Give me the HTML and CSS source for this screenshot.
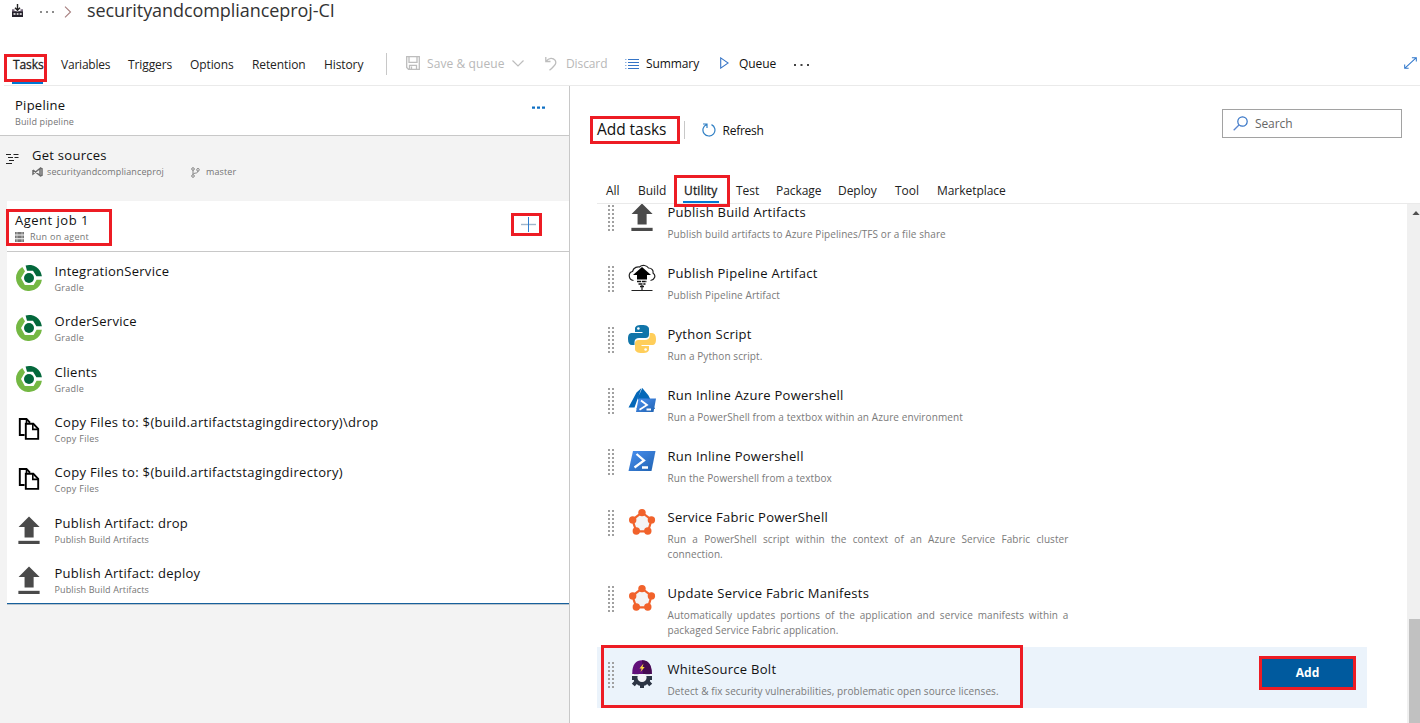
FILE: index.html
```html
<!DOCTYPE html>
<html lang="en">
<head>
<meta charset="utf-8">
<title>securityandcomplianceproj-CI</title>
<link rel="stylesheet" href="styles.css">
</head>
<body>
<svg class="defs" width="0" height="0">
  <defs>
    <linearGradient id="psg" x1="0" y1="0" x2="1" y2="1"><stop offset="0" stop-color="#4a90f0"/><stop offset="1" stop-color="#1f62b0"/></linearGradient>
    <symbol id="gradle" viewBox="0 0 28 28">
      <path d="M7.3 2.900A13 13 0 1 0 26.900 15.800H21.600L18.600 21H9.800L6 14 10 7.200Z" fill="#74b843"/>
      <path d="M10.600 1.400A13 13 0 0 1 26.900 12.200H21.400L18 6.800H12Z" fill="#04683c"/>
      <circle cx="14" cy="14" r="5" fill="#04683c"/>
    </symbol>
    <symbol id="copy" viewBox="0 0 28 28">
      <path d="M9.500 20H4.800V4H11.500L15 7.600M10.800 8.800H18.300L23.200 13.800V23.900H10.800Z" fill="none" stroke="#000" stroke-width="1.900"/>
      <path d="M17.800 8.800V14.400H23.400" fill="none" stroke="#000" stroke-width="1.600"/>
      <path d="M11.500 4V8" stroke="#000" stroke-width="1.600"/>
    </symbol>
    <symbol id="upload" viewBox="0 0 28 29">
      <path d="M14 .5 25 11.500H18.800V22.300H9.400V11.500H3.200Z" fill="#4a4a4a"/><path d="M3 25.700H25V29H3Z" fill="#4a4a4a"/>
    </symbol>
    <symbol id="fabric" viewBox="0 0 28 28">
      <path d="M14 4.500 23.600 12 20 23.400H8.300L4.400 12Z" fill="#f4f4f4" stroke="#f1622b" stroke-width="2.200"/>
      <g fill="#f1622b"><circle cx="14" cy="4.600" r="3.700"/><circle cx="23.400" cy="11.900" r="3.700"/><circle cx="19.800" cy="23" r="3.700"/><circle cx="8.300" cy="23" r="3.700"/><circle cx="4.700" cy="11.900" r="3.700"/></g>
    </symbol>
    <symbol id="grip" viewBox="0 0 6 26">
      <path d="M1 0V26M5 0V26" stroke="#a0a0a0" stroke-width="2" stroke-dasharray="2 2"/>
    </symbol>
  </defs>
</svg>

<header class="top">
  <div class="crumbs">
    <svg class="crumb-logo" width="13" height="14" viewBox="0 0 13 14"><path d="M6.500 0V6M4 3.800 6.500 6.300 9 3.800" fill="none" stroke="#222" stroke-width="1.400"/><path d="M1 5.200H3.500V7H5L6.500 8.200 8 7H9.500V5.200H12V9H1Z" fill="#7a6c80"/><path d="M1 7.500H12V13H1Z" fill="#24212b"/><path d="M2.500 10H4.500M5.700 10H7.500M8.700 10H10.700" stroke="#fff" stroke-width="1.500"/></svg>
    <svg class="crumb-dots" width="14" height="2" viewBox="0 0 14 2"><path d="M0 0H2V2H0ZM6 0H8V2H6ZM12 0H14V2H12Z" fill="#8b8b8b"/></svg>
    <svg class="crumb-sep" width="8" height="12" viewBox="0 0 8 12"><path d="M1 .7 6.500 6 1 11.300" fill="none" stroke="#a67f7f" stroke-width="1.100"/></svg>
    <h1 class="title">securityandcomplianceproj-CI</h1>
  </div>
  <div class="toolbar">
    <nav class="tabs">
      <span class="tab t-tasks">Tasks</span><span class="tab t-vars">Variables</span><span class="tab t-trig">Triggers</span><span class="tab t-opt">Options</span><span class="tab t-ret">Retention</span><span class="tab t-hist">History</span>
    </nav>
    <div class="cmds">
      <span class="cmd c-save off"><svg width="14" height="14" viewBox="0 0 14 14" fill="none" stroke="#bdbdbd" stroke-width="1.300"><path d="M.7.7H13.300V13.300H2.500L.7 11.500ZM3 .7V6.300H11V.7M3.500 13V9.300H10.500V13M5.500 10.500V13"/></svg><b>Save &amp; queue</b><svg width="12" height="7" viewBox="0 0 12 7"><path d="M.5.5 6 6 11.500.5" fill="none" stroke="#bdbdbd" stroke-width="1.200"/></svg></span>
      <span class="cmd c-disc off"><svg width="12" height="15" viewBox="0 0 12 15"><path d="M.8 1V5.500H5.500M1 5.300C4 1.500 8 1.500 10 4.200 12 7 10.500 9 4.500 14.200" fill="none" stroke="#bdbdbd" stroke-width="1.300"/></svg><b>Discard</b></span>
      <span class="cmd c-sum"><svg width="14" height="11" viewBox="0 0 14 11"><path d="M3 1.500H14M3 4.500H14M3 7.500H14M3 10.500H14" stroke="#3574c6"/><path d="M0 1.500H1.500M0 4.500H1.500M0 7.500H1.500M0 10.500H1.500" stroke="#8fb2e0"/></svg><b>Summary</b></span>
      <span class="cmd c-queue"><svg width="9" height="12" viewBox="0 0 9 12"><path d="M.7.9 8.200 6 .7 11.100Z" fill="none" stroke="#3574c6" stroke-width="1.100"/></svg><b>Queue</b></span>
      <svg class="more" width="15" height="2" viewBox="0 0 15 2"><path d="M0 0H2V2H0ZM6.500 0H8.500V2H6.500ZM13 0H15V2H13Z" fill="#444"/></svg>
    </div>
    <svg class="expand" width="13" height="12" viewBox="0 0 14 13"><path d="M1 12 13 1M8.500.7H13.300V5M.7 8V12.300H5" fill="none" stroke="#2f77cc" stroke-width="1.100"/></svg>
  </div>
</header>

<main class="main">
  <section class="left">
    <div class="pipeline">
      <div><div class="name">Pipeline</div><div class="sub">Build pipeline</div></div>
      <svg class="pdots" width="13" height="3" viewBox="0 0 13 3"><path d="M0 .5H3V2.700H0ZM5 .5H8V2.700H5ZM10 .5H13V2.700H10Z" fill="#0f70c4"/></svg>
    </div>
    <div class="sources">
      <svg class="src-icon" width="13" height="12" viewBox="0 0 13 12"><path d="M0 1.500H5M7.500 1.500H12.500M2 4.500H7M8.500 4.500H12.500M3 7.500H8M0 10.500H6" stroke="#222" stroke-width="1.200"/></svg>
      <div>
        <div class="name">Get sources</div>
        <div class="src-meta">
          <svg width="11" height="10" viewBox="0 0 11 10"><path d="M1 3V7L8 1.500V8.500L1 3M8 .8 10 1.800V8.200L8 9.200" fill="none" stroke="#6b6b6b" stroke-width="1.500"/></svg><span class="sub s-proj">securityandcomplianceproj</span>
          <svg class="branch" width="9" height="11" viewBox="0 0 9 11" fill="none" stroke="#858585"><circle cx="2" cy="2" r="1.300"/><circle cx="7" cy="2.800" r="1.300"/><circle cx="2" cy="9" r="1.300"/><path d="M2 3.300V7.700M7 4C7 6 5 6 2.500 6.500"/></svg><span class="sub s-master">master</span>
        </div>
      </div>
    </div>
    <div class="job">
      <div class="job-head">
        <div><div class="name n-job">Agent job 1</div><div class="job-sub"><svg width="9" height="10" viewBox="0 0 9 10"><path d="M0 0H9V2.600H0ZM0 3.600H9V6.200H0ZM0 7.200H9V10H0Z" fill="#777"/><path d="M2 0V10M7 0V10" stroke="#e4e4e4" stroke-width=".6"/></svg><span class="sub s-wide">Run on agent</span></div></div>
        <svg class="plus" width="15" height="15" viewBox="0 0 15 15"><path d="M0 7.500H15" stroke="#9fb6cc" stroke-width="1.400"/><path d="M7.500 0V15" stroke="#2f7fd0"/></svg>
      </div>
      <ul class="steps">
        <li><svg class="ico"><use href="#gradle"/></svg><div><div class="name">IntegrationService</div><div class="sub s-wide">Gradle</div></div></li>
        <li><svg class="ico"><use href="#gradle"/></svg><div><div class="name">OrderService</div><div class="sub s-wide">Gradle</div></div></li>
        <li><svg class="ico"><use href="#gradle"/></svg><div><div class="name">Clients</div><div class="sub s-wide">Gradle</div></div></li>
        <li><svg class="ico"><use href="#copy"/></svg><div><div class="name n-copy">Copy Files to: $(build.artifactstagingdirectory)\drop</div><div class="sub s-wide">Copy Files</div></div></li>
        <li><svg class="ico"><use href="#copy"/></svg><div><div class="name n-copy">Copy Files to: $(build.artifactstagingdirectory)</div><div class="sub s-wide">Copy Files</div></div></li>
        <li><svg class="ico"><use href="#upload"/></svg><div><div class="name">Publish Artifact: drop</div><div class="sub">Publish Build Artifacts</div></div></li>
        <li><svg class="ico"><use href="#upload"/></svg><div><div class="name">Publish Artifact: deploy</div><div class="sub">Publish Build Artifacts</div></div></li>
      </ul>
    </div>
  </section>

  <section class="right">
    <div class="add-head">
      <h2 class="add-title">Add tasks</h2>
      <span class="refresh"><svg width="14" height="14" viewBox="0 0 14 14"><path d="M1 1H5V5M4.600 1.500A6 6 0 1 0 9.500 1.600" fill="none" stroke="#2f7fc4" stroke-width="1.200"/></svg><span>Refresh</span></span>
      <div class="search"><svg width="15" height="15" viewBox="0 0 15 15"><circle cx="9.500" cy="5.500" r="4.700" fill="none" stroke="#3574c6" stroke-width="1.200"/><path d="M6 9 .7 14.300" stroke="#5a86cf" stroke-width="1.300"/></svg><span>Search</span></div>
    </div>
    <nav class="cats"><span class="q1">All</span><span class="q2">Build</span><span class="q3">Utility</span><span class="q4">Test</span><span class="q5">Package</span><span class="q6">Deploy</span><span class="q7">Tool</span><span class="q8">Marketplace</span></nav>
    <div class="catalog">
      <ul class="list">
        <li><svg class="grip"><use href="#grip"/></svg><svg class="ico"><use href="#upload"/></svg><div><div class="name">Publish Build Artifacts</div><p>Publish build artifacts to Azure Pipelines/TFS or a file share</p></div></li>
        <li><svg class="grip"><use href="#grip"/></svg><svg class="ico" viewBox="0 0 28 28"><path d="M5.500 16.500C0 15.500 0 8.500 4.500 7.500 5.500 3 10 2.500 11.500 3 14.500.2 19 1.500 20.500 4 24 4 25.500 6.500 25 9 28.500 11.500 26.500 16 22.500 16.500" fill="none" stroke="#222" stroke-width="1.200"/><path d="M14 3 23 11H19V15.500H9V11H5Z" fill="#000"/><path d="M9 17.500H19M10.500 20H17.500M12 22.500H16" stroke="#111" stroke-width="1.700" stroke-dasharray="4 .8"/><path d="M14 21V26M3.500 26.500H24.500" stroke="#222" stroke-width="1.200"/></svg><div><div class="name">Publish Pipeline Artifact</div><p>Publish Pipeline Artifact</p></div></li>
        <li><svg class="grip"><use href="#grip"/></svg><svg class="ico" viewBox="0 0 28 28"><path d="M14 0C8.500 0 7 1.500 7 4V7H14.500V8H4C1 8 0 10 0 14S1.500 20 4 20H6.500V17C6.500 14.500 8.500 13 11 13H17.500C20 13 21 11.500 21 9.500V4C21 1.500 18.500 0 14 0Z" fill="#1175a9"/><path d="M14 28C19.500 28 21 26.500 21 24V21H13.500V20H24C27 20 28 18 28 14S26.500 8 24 8H21.700V11C21.700 13.500 19.500 15 17 15H10.500C8 15 7 16.500 7 18.500V24C7 26.500 9.500 28 14 28Z" fill="#ffce5a"/><circle cx="10.400" cy="3.500" r="1.300" fill="#fff"/><circle cx="17.600" cy="24.500" r="1.300" fill="#fff"/></svg><div><div class="name">Python Script</div><p>Run a Python script.</p></div></li>
        <li><svg class="grip"><use href="#grip"/></svg><svg class="ico" viewBox="0 0 28 28"><path d="M13.500 2 8.500 6.500.5 21.500H6.500L13.500 2ZM14.300 2 20.500 9.500 27 23H8L15 19 9.500 12.500Z" fill="#0467b8"/><path d="M10.500 12.500H28L25.500 26H8Z" fill="url(#psg)"/><path d="M13 14.500 19 19 11.500 23.800M18.500 23.500H23" fill="none" stroke="#fff" stroke-width="1.800"/></svg><div><div class="name">Run Inline Azure Powershell</div><p>Run a PowerShell from a textbox within an Azure environment</p></div></li>
        <li><svg class="grip"><use href="#grip"/></svg><svg class="ico" viewBox="0 0 28 28"><path d="M5 4H27.500L23.500 24H.5Z" fill="url(#psg)"/><path d="M8.500 7 16 13.500 6.500 20.500M14 20.500H20" fill="none" stroke="#fff" stroke-width="2.300"/></svg><div><div class="name">Run Inline Powershell</div><p>Run the Powershell from a textbox</p></div></li>
        <li class="tall"><svg class="grip"><use href="#grip"/></svg><svg class="ico"><use href="#fabric"/></svg><div><div class="name">Service Fabric PowerShell</div><p>Run a PowerShell script within the context of an Azure Service Fabric cluster connection.</p></div></li>
        <li class="tall"><svg class="grip"><use href="#grip"/></svg><svg class="ico"><use href="#fabric"/></svg><div><div class="name">Update Service Fabric Manifests</div><p>Automatically updates portions of the application and service manifests within a packaged Service Fabric application.</p></div></li>
        <li class="picked"><svg class="grip"><use href="#grip"/></svg><svg class="ico" viewBox="0 0 28 28"><circle cx="14" cy="17.500" r="6.600" fill="#f4f4f8" stroke="#2c3444" stroke-width="4"/><path d="M14 24V28.500M8 22 5.300 25M20 22 22.700 25M4 18H8M20 18H24" stroke="#2c3444" stroke-width="4"/><path d="M4.200 14C4.200 4 8 .2 14 .2S23.800 4 23.800 14Z" fill="#62107a"/><path d="M14 .2C20 .2 23.800 4 23.800 14H15Z" fill="#460b50"/><path d="M3.500 14.200H24.500V16H3.500Z" fill="#f4f4f8"/><path d="M15.500 3.500 11.500 8.500H13.700L12.500 12 16.700 7H14.500Z" fill="#ffd93b"/></svg><div><div class="name">WhiteSource Bolt</div><p>Detect &amp; fix security vulnerabilities, problematic open source licenses.</p></div><button class="add">Add</button></li>
      </ul>
      <div class="scroll"><svg width="8" height="4" viewBox="0 0 9 5"><path d="M0 5 4.500 0 9 5Z" fill="#505050"/></svg><div class="thumb"></div></div>
    </div>
  </section>
</main>
<div class="mark r1"></div><div class="mark r2"></div><div class="mark r3"></div><div class="mark r4"></div><div class="mark r5"></div><div class="mark r6"></div><div class="mark r7"></div>
</body>
</html>
```
FILE: styles.css
```css
* { box-sizing: border-box; }
body { margin: 0; width: 1420px; height: 723px; overflow: hidden; position: relative; background: #fff; color: #111; font-family: "Open Sans", "Noto Sans", sans-serif; font-size: 12px; }
h1, h2, p, ul { margin: 0; padding: 0; font-weight: 400; }
ul { list-style: none; }
svg { display: block; flex: none; }
b { font-weight: 400; }
.defs { position: absolute; }
.top { height: 86px; }
.crumbs { display: flex; height: 43px; padding-left: 11px; }
.crumb-logo { margin-top: 4px; }
.crumb-dots { margin: 11px 0 0 16px; }
.crumb-sep { margin: 6px 0 0 10px; }
.title { margin: -1px 0 0 15px; font-size: 18px; line-height: 22px; letter-spacing: -.07px; color: #333; white-space: nowrap; }
.toolbar { display: flex; height: 43px; margin-left: 4px; padding-left: 9px; border-bottom: 1px solid #eaeaea; }
.tabs { display: flex; width: 374px; height: 22px; margin-top: 10px; border-right: 1px solid #c8c8c8; line-height: 24px; letter-spacing: -.1px; color: #222; }
.t-tasks { width: 48px; -webkit-text-stroke: .3px; }
.t-tasks::after { content: ""; display: block; width: 31px; height: 2px; margin-top: 5px; margin-left: -1px; background: #0078d4; }
.t-vars { width: 67px; letter-spacing: -.22px; }
.t-trig { width: 62px; }
.t-opt { width: 62px; }
.t-ret { width: 72px; }
.cmds { display: flex; height: 40px; align-items: center; padding-left: 19px; }
.cmd { display: flex; align-items: center; height: 40px; letter-spacing: -.1px; }
.off { color: #b8b8b8; }
.c-save { width: 139px; letter-spacing: .08px; }
.c-save b { margin-left: 7px; width: 85px; }
.c-disc { width: 80px; }
.c-disc b { margin-left: 9px; }
.c-sum { width: 95px; }
.c-sum b { margin-left: 7px; }
.c-queue { width: 74px; }
.c-queue b { margin-left: 10px; }
.more { margin-top: 3px; }
.expand { margin: 14px 3px 0 auto; }
.main { display: flex; height: 637px; }
.left { width: 569px; background: #f3f3f3; }
.name { font-size: 13px; line-height: 20px; letter-spacing: .27px; color: #111; white-space: nowrap; }
.n-copy { letter-spacing: .325px; }
.n-job { letter-spacing: .5px; }
.sub { font-size: 9px; line-height: 12px; letter-spacing: .13px; color: #757575; white-space: nowrap; }
.s-wide { letter-spacing: .26px; }
.pipeline { display: flex; justify-content: space-between; height: 50px; padding: 9px 24px 0 15px; background: #fff; border-bottom: 1px solid #c8c8c8; }
.pdots { margin-top: 11px; }
.pipeline .sub { margin-top: 1px; }
.sources { display: flex; height: 65px; padding: 9px 0 0 6px; }
.src-icon { margin: 8px 13px 0 0; }
.src-meta { display: flex; align-items: center; margin-top: 1px; }
.src-meta span { margin-left: 4px; }
.s-proj { width: 118px; }
.branch { margin-left: 26px; }
.src-meta .s-master { margin-left: 6px; }
.job { margin-left: 7px; height: 403px; background: #fff; border-bottom: 1px solid #17609c; box-shadow: 0 1px 0 #b9c4cd; }
.job-head { display: flex; justify-content: space-between; height: 51px; padding: 9px 33px 0 8px; border-bottom: 1px solid #c8c8c8; }
.job-sub { display: flex; align-items: center; gap: 6px; margin-top: 1px; }
.plus { margin-top: 7px; }
.steps li { display: flex; height: 50.35px; padding: 9px 0 0 8px; }
.steps .ico { margin: 3px 11.5px 0 0; }
.steps .sub { margin-top: 1px; }
.ico { width: 28px; height: 28px; }
.right { flex: 1; border-left: 1px solid #c8c8c8; display: flex; flex-direction: column; }
.add-head { display: flex; height: 94px; padding: 23px 18px 0 27px; }
.add-title { width: 88px; height: 18px; margin-top: 12px; font-size: 15.5px; line-height: 17px; letter-spacing: -.05px; border-right: 1px solid #c8c8c8; white-space: nowrap; }
.refresh { display: flex; align-items: center; gap: 7px; height: 20px; margin: 11px 0 0 16.5px; letter-spacing: -.25px; }
.search { display: flex; align-items: center; width: 180px; height: 29px; margin-left: auto; padding-left: 10px; gap: 7px; border: 1px solid #a2a2a2; color: #666; letter-spacing: -.1px; }
.cats { display: flex; height: 24px; margin: 0 0 0 27px; padding-left: 9px; line-height: 22px; letter-spacing: -.05px; border-bottom: 1px solid #eaeaea; color: #222; }
.q1 { width: 32px; }
.q2 { width: 46px; }
.q3 { width: 52px; letter-spacing: .15px; -webkit-text-stroke: .3px; }
.q4 { width: 40px; }
.q5 { width: 62px; }
.q6 { width: 57px; }
.q7 { width: 42px; }
.q3::after { content: ""; display: block; width: 36px; height: 2px; margin: -1px 0 0 -1px; background: #0078d4; }
.catalog { display: flex; justify-content: space-between; height: 519px; overflow: hidden; padding-left: 27px; }
.list { width: 770px; margin-top: -14px; }
.list li { display: flex; height: 61px; padding: 12px 0 0 11px; }
.list li.tall { height: 76px; }
.list li.picked { background: #ebf3fb; }
.grip { width: 6px; height: 26px; margin: 3px 14px 0 0; }
.list .ico { margin: 1px 11.5px 0 0; }
.list p { width: 401px; margin-top: 5px; font-size: 10px; line-height: 15px; letter-spacing: .09px; text-align: justify; color: #7a7a7a; }
.add { width: 93px; height: 30px; margin: -1px 13px 0 auto; border: 0; background: #005a9e; color: #fff; font: 700 12px/30px "Open Sans", sans-serif; padding: 0; }
.scroll { display: flex; flex-direction: column; width: 13px; height: 519px; padding: 7px 0 0 5px; background: #f0f0f0; }
.thumb { width: 11px; height: 104px; margin: 404px 0 0 -3px; background: #c1c1c1; }
.mark { position: absolute; border: 3px solid #ed1c24; }
.r1 { left: 4px; top: 54px; width: 43px; height: 28px; }
.r2 { left: 6px; top: 209px; width: 106px; height: 37px; }
.r3 { left: 511px; top: 213px; width: 31px; height: 23px; }
.r4 { left: 590px; top: 116px; width: 90px; height: 28px; }
.r5 { left: 674px; top: 175px; width: 56px; height: 32px; }
.r6 { left: 601px; top: 645px; width: 422px; height: 63px; }
.r7 { left: 1259px; top: 656px; width: 97px; height: 34px; }
```
